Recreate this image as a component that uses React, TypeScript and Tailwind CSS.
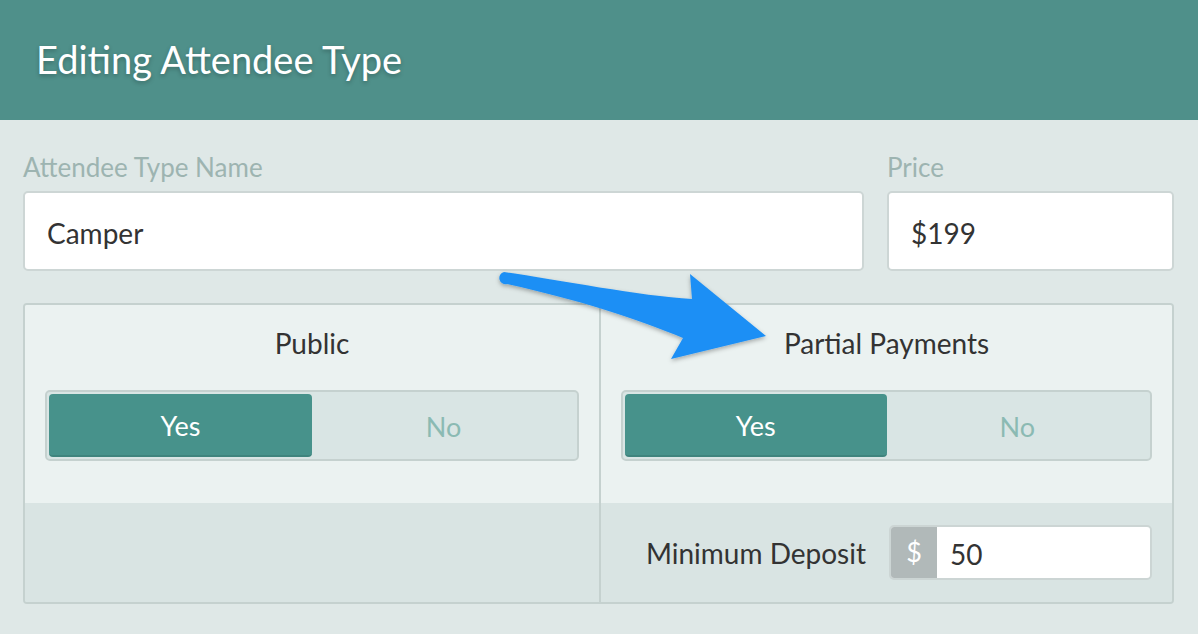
import React from "react";

function Toggle() {
  return (
    <div className="mx-[20px] flex h-[71px] rounded-[5px] border-2 border-[#c5d1cf] bg-[#d9e5e4] p-[2px]">
      <div className="flex flex-1 items-center justify-center rounded-[4px] border-b-2 border-[#3f847d] bg-[#47928b] pt-[4px] text-[27px] text-white">
        Yes
      </div>
      <div className="flex flex-1 items-center justify-center pt-[4px] text-[27px] text-[#8bbab3]">No</div>
    </div>
  );
}

export default function App() {
  return (
    <div className="relative h-[634px] w-[1198px] overflow-hidden bg-[#dfe8e7] font-['Lato','Noto_Sans',sans-serif]">
      <div className="flex h-[120px] items-center bg-[#4f908a] pl-[36px]">
        <h1 className="pb-[2px] text-[38px] leading-none text-white [text-shadow:0_2px_4px_rgba(0,0,0,0.25)]">
          Editing Attendee Type
        </h1>
      </div>

      <div className="pl-[23px] pr-[24px] pt-[32px]">
        <div className="flex gap-[23px]">
          <div className="flex flex-1 flex-col">
            <label className="text-[26px] leading-[1.2] text-[#9db4b1]">Attendee Type Name</label>
            <div className="mt-[8px] flex h-[80px] items-center rounded-[5px] border-2 border-[#cdd6d5] bg-white pl-[22px] pt-[3px] text-[28px] text-[#333]">
              Camper
            </div>
          </div>
          <div className="flex w-[287px] flex-col">
            <label className="text-[26px] leading-[1.2] text-[#9db4b1]">Price</label>
            <div className="mt-[8px] flex h-[80px] items-center rounded-[5px] border-2 border-[#cdd6d5] bg-white pl-[22px] pt-[3px] text-[28px] text-[#333]">
              $199
            </div>
          </div>
        </div>

        <div className="mt-[32px] flex h-[301px] overflow-hidden rounded-[4px] border-2 border-[#c5d1cf]">
          <div className="flex w-[576px] flex-col border-r-2 border-[#c5d1cf]">
            <div className="flex h-[198px] flex-col bg-[#ebf2f1]">
              <div className="pt-[22px] text-center text-[28px] leading-[1.2] text-[#333]">Public</div>
              <div className="mt-[29px]">
                <Toggle />
              </div>
            </div>
            <div className="flex-1 bg-[#d9e4e3]" />
          </div>
          <div className="flex flex-1 flex-col">
            <div className="flex h-[198px] flex-col bg-[#ebf2f1]">
              <div className="pt-[22px] text-center text-[28px] leading-[1.2] text-[#333]">Partial Payments</div>
              <div className="mt-[29px]">
                <Toggle />
              </div>
            </div>
            <div className="flex flex-1 items-center justify-end gap-[23px] bg-[#d9e4e3] pr-[20px]">
              <span className="text-[28px] text-[#333]">Minimum Deposit</span>
              <div className="flex h-[55px] w-[263px] rounded-[5px] border-2 border-[#ccd5d4] bg-white">
                <div className="flex w-[46px] items-center justify-center rounded-l-[3px] bg-[#b1b9b9] text-[27px] text-white">
                  $
                </div>
                <div className="flex items-center pl-[13px] pt-[2px] text-[28px] text-[#333]">50</div>
              </div>
            </div>
          </div>
        </div>
      </div>

      <svg
        className="pointer-events-none absolute left-0 top-0"
        width="1198"
        height="634"
        viewBox="0 0 1198 634"
      >
        <defs>
          <filter id="sh" x="-10%" y="-30%" width="120%" height="160%">
            <feDropShadow dx="0" dy="2" stdDeviation="2" floodColor="#000" floodOpacity="0.3" />
          </filter>
        </defs>
        <path
          d="M 504 272 C 560 280, 640 296, 692 299 L 690 274 L 766 336 L 671 359 L 683 338 C 640 320, 580 300, 507 284 A 6 6 0 0 1 504 272 Z"
          fill="#1e8ff5"
          filter="url(#sh)"
        />
      </svg>
    </div>
  );
}
